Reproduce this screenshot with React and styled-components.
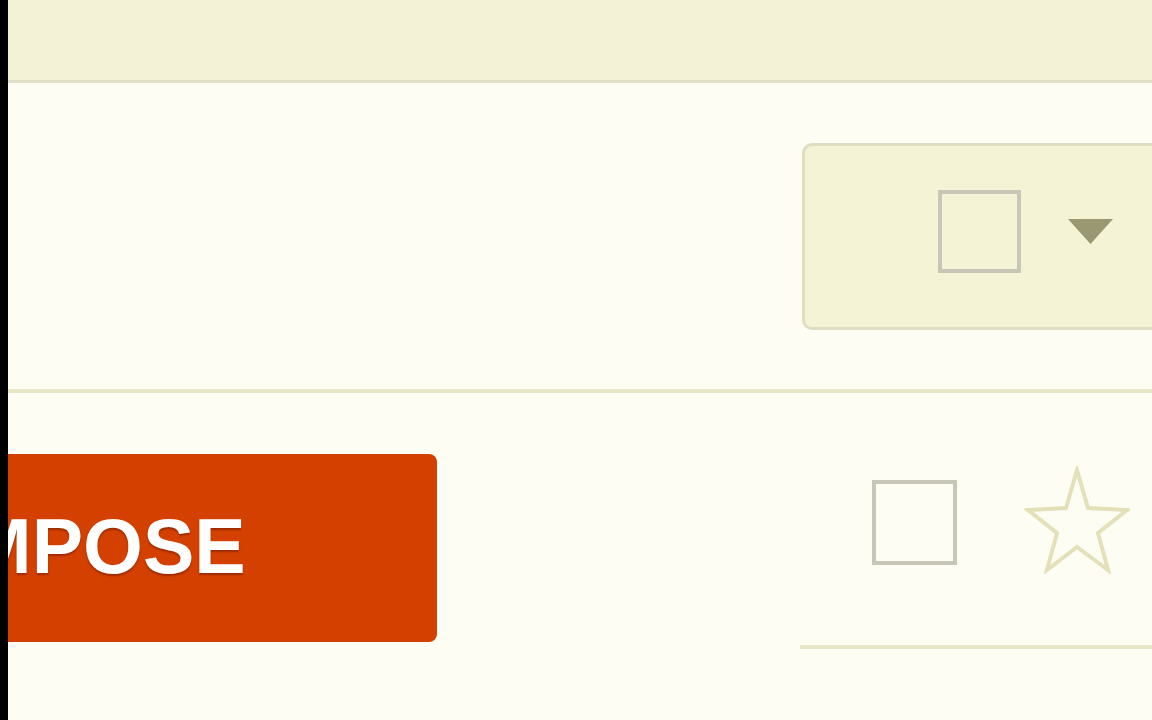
import React from "react";
import styled, { createGlobalStyle } from "styled-components";

const GlobalStyle = createGlobalStyle`
  html, body {
    margin: 0;
    padding: 0;
    background: #fdfdf3;
  }
  body {
    font-family: "Liberation Sans", Arial, sans-serif;
  }
`;

const Page = styled.div`
  display: flex;
  width: 1152px;
  height: 720px;
  overflow: hidden;
`;

const Strip = styled.div`
  flex: 0 0 8px;
  background: #000;
`;

const Main = styled.div`
  flex: 1;
  min-width: 0;
  overflow: hidden;
  background: #fdfdf3;
  display: flex;
  flex-direction: column;
`;

const TopBar = styled.div`
  height: 80px;
  flex: 0 0 auto;
  background: #f4f2d6;
  border-bottom: 3px solid #e2e0c4;
`;

const Split = styled.div`
  display: grid;
  grid-template-columns: 792px 1fr;
  flex: 0 0 auto;
`;

const ToolbarRow = styled(Split)`
  height: 306px;
  border-bottom: 4px solid #e8e6c4;
`;

const ToolbarCell = styled.div`
  padding: 60px 0 0 2px;
`;

const Toolbar = styled.div`
  width: 420px;
  height: 187px;
  box-sizing: border-box;
  background: #f5f3d5;
  border: 3px solid #e0dec2;
  border-right: none;
  border-radius: 10px 0 0 10px;
  display: flex;
  align-items: center;
  gap: 47px;
  padding: 0 0 10px 133px;
`;

const Checkbox = styled.div`
  width: ${(p) => p.size}px;
  height: ${(p) => p.size}px;
  margin-top: ${(p) => p.offset || 0}px;
  box-sizing: border-box;
  border: 4px solid #c8c6b6;
  background: transparent;
  flex: 0 0 auto;
`;

const Caret = styled.svg`
  width: 45px;
  height: 25px;
  flex: 0 0 auto;
`;

const LeftCell = styled.div`
  padding-top: 61px;
`;

const ComposeButton = styled.button`
  display: flex;
  align-items: center;
  margin-left: -200px;
  width: 629px;
  height: 188px;
  padding: 0 0 4px 44px;
  border: none;
  border-radius: 8px;
  background: #d44000;
  color: #fff;
  font-family: "Liberation Sans", Arial, sans-serif;
  font-weight: 700;
  font-size: 77px;
  line-height: 77px;
  text-shadow: 0 2px 2px rgba(90, 20, 0, 0.45);
  cursor: pointer;
`;

const MessageRow = styled.div`
  display: flex;
  align-items: flex-start;
  gap: 67px;
  height: 256px;
  box-sizing: border-box;
  padding: 73px 0 0 72px;
  border-bottom: 4px solid #e8e6c4;
`;

const Star = styled.svg`
  width: 106px;
  height: 108px;
  flex: 0 0 auto;
`;

export default function App() {
  return (
    <>
      <GlobalStyle />
      <Page>
        <Strip />
        <Main>
          <TopBar />
          <ToolbarRow>
            <div />
            <ToolbarCell>
              <Toolbar>
                <Checkbox size={83} />
                <Caret viewBox="0 0 45 25">
                  <polygon points="0,0 45,0 22.5,25" fill="#9a9872" />
                </Caret>
              </Toolbar>
            </ToolbarCell>
          </ToolbarRow>
          <Split>
            <LeftCell>
              <ComposeButton>COMPOSE</ComposeButton>
            </LeftCell>
            <MessageRow>
              <Checkbox size={85} offset={14} />
              <Star viewBox="0 0 106 108">
                <polygon
                  points="53,4 64,42 103,44 74,67 84,104 53,81 23,104 33,67 4,44 42,42"
                  fill="none"
                  stroke="#e4e1b8"
                  strokeWidth="4"
                />
              </Star>
            </MessageRow>
          </Split>
        </Main>
      </Page>
    </>
  );
}
